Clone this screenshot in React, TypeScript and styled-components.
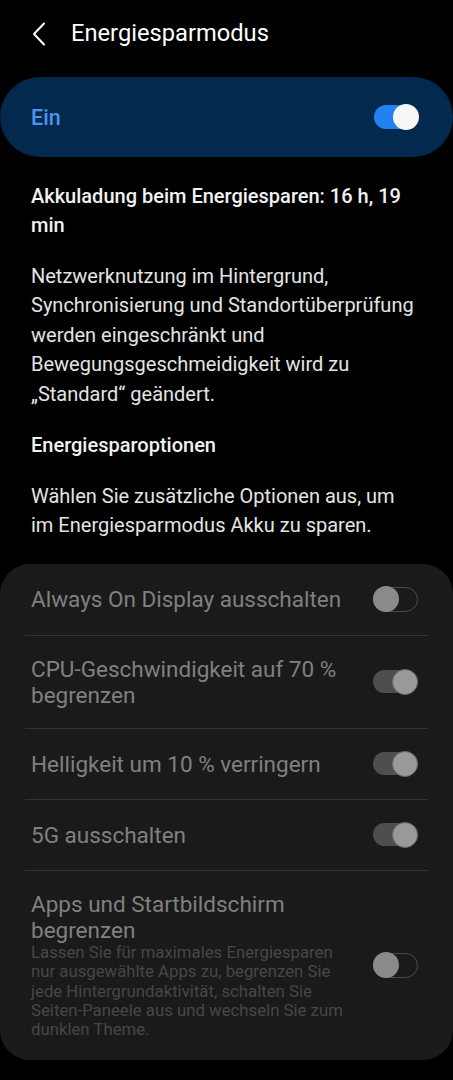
import React from 'react'
import styled, { createGlobalStyle } from 'styled-components'

const GlobalStyle = createGlobalStyle`
  html, body {
    margin: 0;
    padding: 0;
    background: #000;
  }
  body {
    font-family: Roboto, "Noto Sans", "Liberation Sans", sans-serif;
    -webkit-font-smoothing: antialiased;
  }
  * {
    box-sizing: border-box;
  }
`

interface ToggleProps {
  on: boolean;
}

const options = [
  { label: 'Always On Display ausschalten', on: false },
  { label: 'CPU-Geschwindigkeit auf 70 % begrenzen', on: true },
  { label: 'Helligkeit um 10 % verringern', on: true },
  { label: '5G ausschalten', on: true },
]

export default function App() {
  return (
    <>
      <GlobalStyle />
      <Screen>
        <Header>
          <BackButton>
            <svg width="14" height="24" viewBox="0 0 14 24" fill="none">
              <path d="M12 1.5 L2 12 L12 22.5" stroke="#fff" strokeWidth="2" strokeLinecap="round" strokeLinejoin="round" />
            </svg>
          </BackButton>
          <Title>Energiesparmodus</Title>
        </Header>

        <MasterSwitch>
          <MasterLabel>Ein</MasterLabel>
          <BlueToggle>
            <Knob />
          </BlueToggle>
        </MasterSwitch>

        <Info>
          <Strong>Akkuladung beim Energiesparen: 16 h, 19 min</Strong>
          <Paragraph>
            Netzwerknutzung im Hintergrund, Synchronisierung und Standortüberprüfung werden eingeschränkt und
            Bewegungsgeschmeidigkeit wird zu „Standard“ geändert.
          </Paragraph>
          <Strong>Energiesparoptionen</Strong>
          <Paragraph>Wählen Sie zusätzliche Optionen aus, um im Energiesparmodus Akku zu sparen.</Paragraph>
        </Info>

        <OptionsCard>
          {options.map((o) => (
            <OptionRow key={o.label}>
              <OptionText>
                <OptionTitle>{o.label}</OptionTitle>
              </OptionText>
              <GreyToggle on={o.on}>
                <GreyKnob on={o.on} />
              </GreyToggle>
            </OptionRow>
          ))}
          <OptionRow>
            <OptionText>
              <OptionTitle>Apps und Startbildschirm begrenzen</OptionTitle>
              <OptionSub>
                Lassen Sie für maximales Energiesparen nur ausgewählte Apps zu, begrenzen Sie jede
                Hintergrundaktivität, schalten Sie Seiten-Paneele aus und wechseln Sie zum dunklen Theme.
              </OptionSub>
            </OptionText>
            <GreyToggle on={false}>
              <GreyKnob on={false} />
            </GreyToggle>
          </OptionRow>
        </OptionsCard>
      </Screen>
    </>
  )
}

const Screen = styled.div`
  width: 453px;
  min-height: 1080px;
  padding-bottom: 20px;
  background: #000;
  color: #fff;
`

const Header = styled.header`
  display: flex;
  align-items: center;
  height: 66px;
  padding-left: 32px;
`

const BackButton = styled.div`
  display: flex;
  align-items: center;
  width: 39px;
  margin-top: 1px;
`

const Title = styled.h1`
  margin: 0;
  font-size: 23.7px;
  font-weight: 400;
  color: #fff;
`

const MasterSwitch = styled.div`
  display: flex;
  align-items: center;
  justify-content: space-between;
  height: 80px;
  margin-top: 11px;
  padding: 0 35px 0 31px;
  border-radius: 40px;
  background: #03294f;
`

const MasterLabel = styled.span`
  font-size: 21.5px;
  font-weight: 500;
  color: #4a95ee;
`

const BlueToggle = styled.div`
  position: relative;
  width: 44px;
  height: 24px;
  border-radius: 12px;
  background: #2381f2;
`

const Knob = styled.div`
  position: absolute;
  right: -1px;
  top: -1px;
  width: 26px;
  height: 26px;
  border-radius: 50%;
  background: #f7f7f7;
`

const Info = styled.section`
  padding: 25px 36px 0 31px;
  display: flex;
  flex-direction: column;
  gap: 22px;
`

const Strong = styled.p`
  margin: 0;
  font-size: 20px;
  font-weight: 500;
  line-height: 29px;
  color: #f2f2f2;
`

const Paragraph = styled.p`
  margin: 0;
  font-size: 20px;
  font-weight: 400;
  line-height: 29.4px;
  color: #e4e4e4;
`

const OptionsCard = styled.section`
  margin-top: 23px;
  padding: 0 25px;
  border-radius: 30px;
  background: #1a1a1a;
`

const OptionRow = styled.div`
  display: flex;
  align-items: center;
  gap: 26px;
  min-height: 71px;
  padding: 20px 10px 20px 6px;
  & + & {
    border-top: 1px solid #333;
  }
`

const OptionText = styled.div`
  flex: 1;
  display: flex;
  flex-direction: column;
`

const OptionTitle = styled.span`
  font-size: 22.5px;
  line-height: 26px;
  color: #808080;
`

const OptionSub = styled.span`
  font-size: 16.75px;
  line-height: 19.4px;
  color: #474747;
`

const GreyToggle = styled.div<ToggleProps>`
  position: relative;
  flex: none;
  width: 45px;
  height: ${({ on }) => (on ? '23px' : '25px')};
  border-radius: 13px;
  background: ${({ on }) => (on ? '#4e4e4e' : 'transparent')};
  border: ${({ on }) => (on ? 'none' : '1px solid #4a4a4a')};
`

const GreyKnob = styled.div<ToggleProps>`
  position: absolute;
  top: 50%;
  ${({ on }) => (on ? 'right: 0;' : 'left: -1px;')}
  width: 26px;
  height: 26px;
  margin-top: -13px;
  border-radius: 50%;
  background: ${({ on }) => (on ? '#999' : '#8a8a8a')};
  border: ${({ on }) => (on ? '1px solid #6a6a6a' : 'none')};
`
